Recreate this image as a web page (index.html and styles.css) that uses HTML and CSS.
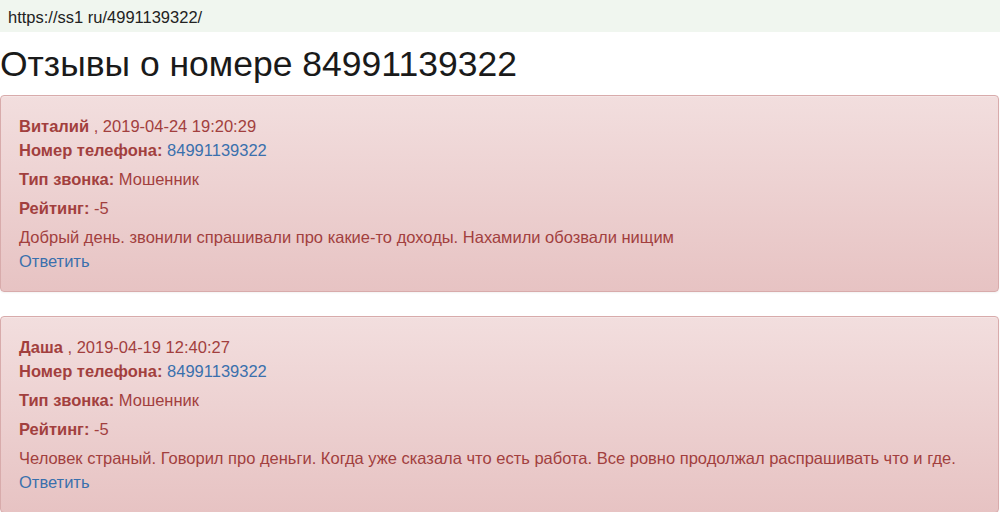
FILE: index.html
```html
<!DOCTYPE html>
<html>
<head>
  <meta charset='UTF-8'>
  <title>Отзывы о номере 84991139322</title>
  <link rel="stylesheet" href="styles.css">
</head>
<body>
  <div class='url-bar'>https://ss1 ru/4991139322/</div>

  <h1>Отзывы о номере 84991139322</h1>

  <!-- Review 1 -->
  <div class='review'>
    <div class='review-head'><strong>Виталий</strong> , 2019-04-24 19:20:29</div>
    <div class='review-row'><strong>Номер телефона:</strong> <a href='#'>84991139322</a></div>
    <div class='review-row spaced'><strong>Тип звонка:</strong> Мошенник</div>
    <div class='review-row spaced'><strong>Рейтинг:</strong> -5</div>
    <div class='review-row spaced'>Добрый день. звонили спрашивали про какие-то доходы. Нахамили обозвали нищим</div>
    <div class='review-row'><a href='#'>Ответить</a></div>
  </div>

  <!-- Review 2 -->
  <div class='review'>
    <div class='review-head'><strong>Даша</strong> , 2019-04-19 12:40:27</div>
    <div class='review-row'><strong>Номер телефона:</strong> <a href='#'>84991139322</a></div>
    <div class='review-row spaced'><strong>Тип звонка:</strong> Мошенник</div>
    <div class='review-row spaced'><strong>Рейтинг:</strong> -5</div>
    <div class='review-row spaced'>Человек страный. Говорил про деньги. Когда уже сказала что есть работа. Все ровно продолжал распрашивать что и где.</div>
    <div class='review-row'><a href='#'>Ответить</a></div>
  </div>
</body>
</html>
```

FILE: styles.css
```css
* { margin: 0; padding: 0; box-sizing: border-box; }
body { font-family: "Liberation Sans", Arial, sans-serif; background: #fff; color: #222; }
.url-bar { height: 32px; background: #f0f6ef; color: #222; font-size: 16.5px; line-height: 34px; padding-left: 8px; }
h1 { font-size: 35.5px; font-weight: normal; line-height: 48px; margin: 8px 0 7px; color: #1a1a1a; }
.review { width: 999px; color: #a23f3e; font-size: 16.5px; line-height: 24px; padding: 18px 18px; margin-bottom: 24px; border: 1px solid #d8abab; border-radius: 4px; background: linear-gradient(to bottom, #f2dede 0%, #e7c3c3 100%); box-shadow: inset 0 1px 0 rgba(255,255,255,0.25), 0 1px 2px rgba(0,0,0,0.05); }
.review strong { font-weight: bold; }
.review a { color: #3a70ad; text-decoration: none; }
.review-row.spaced { margin-top: 5px; }
```
